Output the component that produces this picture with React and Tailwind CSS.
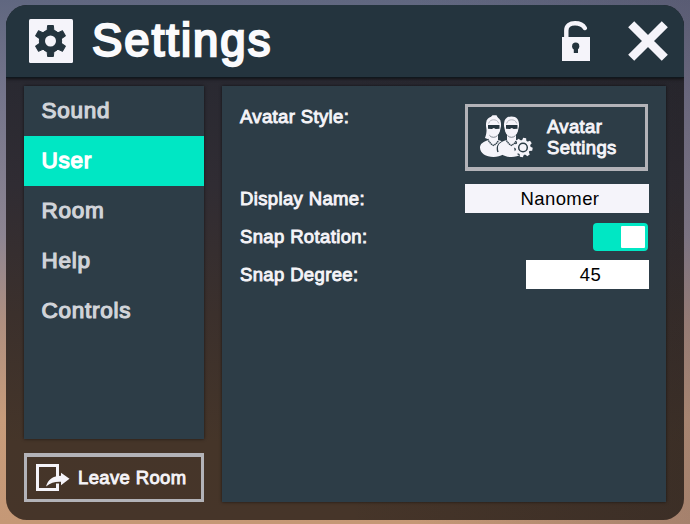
import React from "react";

const NAV = ["Sound", "User", "Room", "Help", "Controls"];

function GearBadge() {
  return (
    <svg className="h-11 w-11 shrink-0" viewBox="0 0 44 44">
      <rect width="44" height="44" rx="1.5" fill="#f5f4fa" />
      <g fill="#24343e" stroke="#24343e" strokeLinejoin="round">
        <circle cx="21.5" cy="22" r="11.2" />
        {[0, 60, 120, 180, 240, 300].map((a) => (
          <path key={a} d="M18 13l.6-6.500h5.800l.6 6.500z" transform={`rotate(${a} 21.5 22)`} />
        ))}
      </g>
      <circle cx="21.5" cy="22" r="5.5" fill="#f5f4fa" />
    </svg>
  );
}

function UnlockIcon() {
  return (
    <svg className="h-10 w-7" viewBox="0 0 28 40">
      <path d="M4.3 17V9.5C4.3 4.8 8 2.2 13 2.2c4.600 0 8 1.600 9.800 4.800" fill="none" stroke="#f5f4fa" strokeWidth="4.400" strokeLinecap="round" />
      <path d="M0 16h28v24H0z" fill="#f5f4fa" />
      <circle cx="13.700" cy="25.200" r="3.600" fill="#24343e" />
      <path d="M11.800 26h4.200v6h-4.200z" fill="#24343e" />
    </svg>
  );
}

function CloseIcon() {
  return (
    <svg className="h-10 w-10" viewBox="0 0 40 40">
      <path d="M3.200 3.200L36.800 36.800M36.800 3.200L3.200 36.800" stroke="#f5f4fa" strokeWidth="8.600" />
    </svg>
  );
}

function Person({ ponytail }) {
  return (
    <g>
      <path d="M0 32.500c0-3.800 3.500-6 9-7.500v-5h9v5c5.500 1.500 9 3.700 9 7.500 0 5.800-6 9.500-13.500 9.500S0 38.300 0 32.500z" fill="#f5f4fa" />
      <path d="M6 11C5.700 5 8 1.500 13.500 1.500S21.300 5 21 11l-1.200 5.500c-1 3.200-3.300 5-6.300 5s-5.300-1.800-6.300-5z" fill="#f5f4fa" />
      {ponytail && <path d="M7.500 8C6 12 7.500 17 5 23l3.800 1.500C10 19 8.500 14 9 9zM10 3l2.500-2.800h4L18 3z" fill="#f5f4fa" />}
      <path d="M8.600 8.500c1-3 3-3.700 5-3.700s4.200.7 5.200 3.700" fill="none" stroke="#a3a7b0" strokeWidth=".8" />
      <path d="M8 9.900h11.500v3.900l-3.800.3-1.900-1.200-1.900 1.200-3.900-.3z" fill="#24343e" />
      <path d="M9.500 20.500q1.500 1.800 4 1.800t4-1.800" fill="none" stroke="#5f6a74" strokeWidth=".8" />
      <path d="M8.500 25.500q1.800 3.300 5 5 3.200-1.700 5-5" fill="none" stroke="#2d3d47" strokeWidth="1.400" strokeDasharray="1.500 .5" />
    </g>
  );
}

function AvatarsIcon() {
  return (
    <svg className="h-[44px] w-[53px] shrink-0" viewBox="0 0 53 44">
      <Person ponytail />
      <g transform="translate(18 0)">
        <path d="M0 37c-2-6 1-10 9-12" fill="none" stroke="#2d3d47" strokeWidth="1.500" />
        <Person />
      </g>
      <circle cx="43" cy="32.500" r="9" fill="#2d3d47" />
      <circle cx="43" cy="32.500" r="7.500" fill="#f5f4fa" />
      {[0, 45, 90, 135, 180, 225, 270, 315].map((a) => (
        <path key={a} d="M40.600 26.500l.9-3.600h3l.9 3.600z" fill="#f5f4fa" transform={`rotate(${a + 10} 43 32.500)`} />
      ))}
      <circle cx="43" cy="32.500" r="4.300" fill="#f5f4fa" stroke="#2d3d47" strokeWidth="1.500" />
    </svg>
  );
}

function LeaveIcon() {
  return (
    <svg className="h-[28px] w-[34px] shrink-0" viewBox="0 0 34 28">
      <path d="M21.500 13v-11.500h-20v24h20v-6" fill="none" stroke="#f5f4fa" strokeWidth="3" />
      <path d="M10 22.500C12 15.500 17 11.800 25 11.800V8.800l8.500 6-8.500 6.500v-3.500c-6-.3-10 .9-15 4.700z" fill="#f5f4fa" />
    </svg>
  );
}

function Label({ children }) {
  return (
    <span className="whitespace-nowrap text-[18.5px] leading-[30px] tracking-[0.36px] text-[#f5f4f8] [-webkit-text-stroke:0.9px_#f5f4f8]">
      {children}
    </span>
  );
}

export default function App() {
  return (
    <div className="h-[524px] w-[690px] overflow-hidden bg-[linear-gradient(90deg,transparent_60%,rgba(70,60,80,0.25)),linear-gradient(180deg,#606780_0%,#75758b_18%,#8d8592_45%,#b09080_62%,#c79c7b_80%,#c59876_100%)] pl-1.5 pt-[5px] font-['Liberation_Sans',Arial,sans-serif]">
      <div className="flex h-[515px] w-[678px] flex-col overflow-hidden rounded-[21px] bg-[linear-gradient(90deg,transparent_50%,rgba(30,27,30,0.25)),linear-gradient(180deg,#292931_14%,#302c33_35%,#3b302c_60%,#453529_85%,#463529_100%)]">
        <header className="flex h-[73px] shrink-0 items-center border-b border-[#10171d] bg-[#24343e] pl-[23px] pr-4 shadow-[0_1px_3px_rgba(0,0,0,0.6)]">
          <GearBadge />
          <h1 className="ml-[19px] text-[45.5px] leading-[72px] tracking-[2px] text-[#fafafc] [-webkit-text-stroke:2.3px_#fafafc]">Settings</h1>
          <div className="ml-auto flex items-center gap-[38px]">
            <UnlockIcon />
            <CloseIcon />
          </div>
        </header>
        <div className="flex min-h-0 grow gap-[18px] pb-[18px] pl-[18px] pr-[18px] pt-2">
          <aside className="flex w-[180px] shrink-0 flex-col gap-3.5">
            <nav className="grow bg-[#2d3d47] shadow-[0_0_3px_rgba(0,0,0,0.6)]">
              {NAV.map((item) => (
                <div
                  key={item}
                  className={
                    item === "User"
                      ? "h-[50px] bg-[#00e7c4] pl-[17.5px] text-[22.5px] leading-[50px] tracking-[0.75px] text-white [-webkit-text-stroke:1.3px_white]"
                      : "h-[50px] pl-[17.5px] text-[22.5px] leading-[50px] tracking-[0.75px] text-[#d1d4d9] [-webkit-text-stroke:1.2px_#d1d4d9]"
                  }
                >
                  {item}
                </div>
              ))}
            </nav>
            <button className="flex h-[49px] shrink-0 items-center border-[3px] border-t-4 border-[#b3b3b8] pl-[9px]">
              <LeaveIcon />
              <span className="ml-2 whitespace-nowrap text-[18.5px] tracking-[0.36px] text-[#f5f4f8] [-webkit-text-stroke:0.9px_#f5f4f8]">Leave Room</span>
            </button>
          </aside>
          <main className="flex grow flex-col bg-[#2d3d47] pl-[18px] pr-[17px] pt-[18px] shadow-[0_0_3px_rgba(0,0,0,0.6)]">
            <div className="flex h-[80px] items-start justify-between">
              <span className="whitespace-nowrap text-[18.5px] leading-[26px] tracking-[0.36px] text-[#f5f4f8] [-webkit-text-stroke:0.9px_#f5f4f8]">
                Avatar Style:
              </span>
              <button className="mr-px flex h-[67px] w-[183px] items-center border-[3px] border-b-4 border-[#b3b3b8] pl-3 text-left">
                <AvatarsIcon />
                <span className="ml-3.5 pt-px text-[18.5px] leading-[20.5px] tracking-[0.36px] text-[#f5f4f8] [-webkit-text-stroke:0.9px_#f5f4f8]">
                  Avatar
                  <br />
                  Settings
                </span>
              </button>
            </div>
            <div className="flex h-[38px] items-start justify-between">
              <Label>Display Name:</Label>
              <div className="h-[29px] w-[184px] bg-[#f5f4fa] pl-1.5 text-center text-[18.5px] leading-[30px] tracking-[0.4px] text-black">Nanomer</div>
            </div>
            <div className="flex h-[38px] items-start justify-between">
              <Label>Snap Rotation:</Label>
              <div className="mr-px mt-px flex h-7 w-[55px] items-start justify-end rounded bg-[#00e7c4] p-[3px]">
                <div className="h-[22px] w-6 rounded-[1px] bg-white" />
              </div>
            </div>
            <div className="flex h-[38px] items-start justify-between">
              <Label>Snap Degree:</Label>
              <div className="h-[29px] w-[123px] bg-white pl-1.5 text-center text-[18.5px] leading-[30px] tracking-[0.4px] text-black">45</div>
            </div>
          </main>
        </div>
      </div>
    </div>
  );
}
